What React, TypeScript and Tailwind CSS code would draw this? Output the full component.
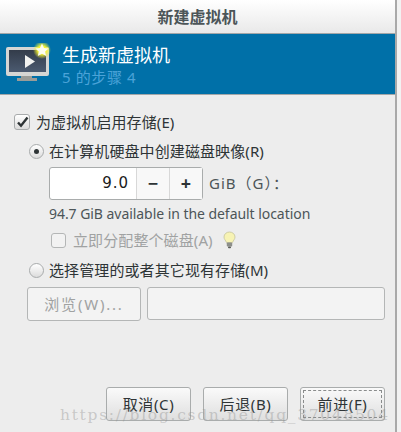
const cjk = "font-['Noto_Sans','Noto_Sans_CJK_SC',sans-serif]";

function Radio({ checked }: { checked?: boolean }) {
    return (
        <span className="w-[15px] h-[15px] rounded-full border border-[#a8abac] bg-gradient-to-b from-white to-[#dcdcdc] flex items-center justify-center shrink-0">
            {checked && <span className="w-[5px] h-[5px] rounded-full bg-[#2e3436]" />}
        </span>
    );
}

function MonitorIcon() {
    return (
        <svg width="46" height="42" viewBox="0 0 46 42" className="shrink-0">
            <defs>
                <radialGradient id="glow">
                    <stop offset="0.45" stopColor="#f6f531" />
                    <stop offset="1" stopColor="#f6f531" stopOpacity="0" />
                </radialGradient>
                <linearGradient id="screen" x1="0" y1="0" x2="0" y2="1">
                    <stop offset="0" stopColor="#333c4a" />
                    <stop offset="1" stopColor="#4b5a70" />
                </linearGradient>
            </defs>
            <rect x="0" y="4" width="43" height="29" rx="2" fill="#d5d6d4" />
            <rect x="3" y="7" width="37" height="22" fill="url(#screen)" />
            <path d="M15 33h11v2h5v3H11v-3h4z" fill="#9a9c98" />
            <path d="M19 12l10 6.500-10 6.500z" fill="#f1f2f0" />
            <circle cx="36" cy="7" r="9" fill="url(#glow)" />
            <path d="M36 .5l2 4.400 4.600.5-3.400 3.100 1 4.600-4.200-2.400-4.200 2.400 1-4.600-3.400-3.100 4.600-.5z" fill="#fdfdf0" />
        </svg>
    );
}

function BulbIcon() {
    return (
        <svg width="13" height="18" viewBox="0 0 13 18" className="shrink-0">
            <path d="M6.5 1C3.4 1 1 3.2 1 6c0 2.2 1.600 3.200 2.500 5.500h6C10.400 9.200 12 8.200 12 6c0-2.800-2.400-5-5.500-5z" fill="#f7f3b4" stroke="#c4c39c" strokeWidth="0.8" />
            <rect x="3.800" y="11.500" width="5.400" height="4" rx="0.8" fill="#8d8f8a" />
            <rect x="5" y="15.500" width="3" height="1.800" rx="0.8" fill="#5c5e5a" />
        </svg>
    );
}

function ActionButton({ label, focused }: { label: string; focused?: boolean }) {
    return (
        <button className="w-[85px] h-[34px] rounded-[3px] border border-[#a9acac] bg-gradient-to-b from-[#fafafa] to-[#dfdfdf] text-[15px] tracking-[0.6px] text-[#2e3436] p-[2px]">
            <span className={`flex w-full h-full items-center justify-center ${focused ? "border border-dashed border-[#8a8c8c]" : ""}`}>{label}</span>
        </button>
    );
}

export default function App() {
    return (
        <div className={`relative w-[401px] h-[432px] overflow-hidden flex bg-[#f2f2f2] ${cjk}`}>
            <div className="w-[397px] h-full flex flex-col bg-[#ededed] border-r-2 border-[#a9a9a9]">
                {/* Title bar */}
                <div className="h-[33px] shrink-0 bg-gradient-to-b from-white to-[#e9e9e9] flex items-center justify-center text-[16px] font-bold text-[#4c5558]">
                    新建虚拟机
                </div>

                {/* Blue banner */}
                <div className="h-[62px] shrink-0 bg-[#0070a8] border-y border-[#a2a6a8] flex items-center pl-[6px] gap-[10px]">
                    <MonitorIcon />
                    <div className="flex flex-col pt-[1px]">
                        <span className="text-[18px] leading-[24px] text-white">生成新虚拟机</span>
                        <span className="text-[15px] leading-[20px] tracking-[0.6px] text-[#4ba3d8]">5 的步骤 4</span>
                    </div>
                </div>

                {/* Form */}
                <div className="flex-1 flex flex-col pl-[14px] pt-[18px] text-[15px] tracking-[0.1px] text-[#2e3436]">
                    <label className="flex items-center gap-[6px] h-[18px]">
                        <span className="w-[16px] h-[16px] rounded-[3px] border border-[#a8abac] bg-gradient-to-b from-white to-[#dcdcdc] flex items-center justify-center">
                            <svg width="13" height="12" viewBox="0 0 13 12">
                                <path d="M2 6.500l3 3.200L11.500 1.500" fill="none" stroke="#2e3436" strokeWidth="2.400" />
                            </svg>
                        </span>
                        为虚拟机启用存储(E)
                    </label>

                    <div className="flex items-center gap-[5px] pl-[15px] mt-[11px] h-[18px]">
                        <Radio checked />
                        在计算机硬盘中创建磁盘映像(R)
                    </div>

                    <div className="flex items-center pl-[35px] mt-[7px]">
                        <div className="w-[154px] h-[33px] flex rounded-[3px] border border-[#a9acac] bg-white">
                            <span className="w-[86px] flex items-center justify-end pr-[7px] text-[15px] tracking-[1px] text-[#1a1a1a] font-['DejaVu_Sans',sans-serif]">9.0</span>
                            <span className="w-[33px] flex items-center justify-center border-l border-[#d8d8d8] bg-[#f8f8f8] text-[18px] font-bold">−</span>
                            <span className="flex-1 flex items-center justify-center border-l border-[#d8d8d8] bg-[#f8f8f8] text-[18px] font-bold">+</span>
                        </div>
                        <span className="ml-[6px] tracking-[1px] text-[#4c5558]">GiB（G）：</span>
                    </div>

                    <div className="pl-[35px] mt-[5px] h-[18px] leading-[18px] text-[14px] tracking-[-0.05px] text-[#4c5558]">
                        94.7 GiB available in the default location
                    </div>

                    <div className="flex items-center pl-[37px] mt-[8px] h-[18px] text-[#a0a2a2]">
                        <span className="w-[15px] h-[15px] rounded-[3px] border border-[#b4b6b6] bg-[#f2f2f2] mr-[7px]" />
                        立即分配整个磁盘(A)
                        <span className="ml-[10px]"><BulbIcon /></span>
                    </div>

                    <div className="flex items-center gap-[5px] pl-[15px] mt-[12px] h-[18px]">
                        <Radio />
                        选择管理的或者其它现有存储(M)
                    </div>

                    <div className="flex gap-[6px] pl-[13px] mt-[8px]">
                        <button className="w-[114px] h-[34px] rounded-[3px] border border-[#b4b6b6] bg-[#f3f3f3] text-[15px] tracking-[1.800px] text-[#a0a2a2]">浏览(W)...</button>
                        <div className="w-[238px] h-[33px] rounded-[3px] border border-[#b4b6b6] bg-[#f3f3f3]" />
                    </div>

                    <div className="flex justify-end gap-[12px] pr-[10px] mt-[66px]">
                        <ActionButton label="取消(C)" />
                        <ActionButton label="后退(B)" />
                        <ActionButton label="前进(F)" focused />
                    </div>
                </div>
            </div>

            {/* Blog watermark */}
            <span className="absolute left-[60px] top-[404px] whitespace-nowrap text-[15.500px] tracking-[1.700px] text-[#8f8f8f]/40 font-['DejaVu_Serif',serif]">
                https://blog.csdn.net/qq_37048504
            </span>
        </div>
    );
}
